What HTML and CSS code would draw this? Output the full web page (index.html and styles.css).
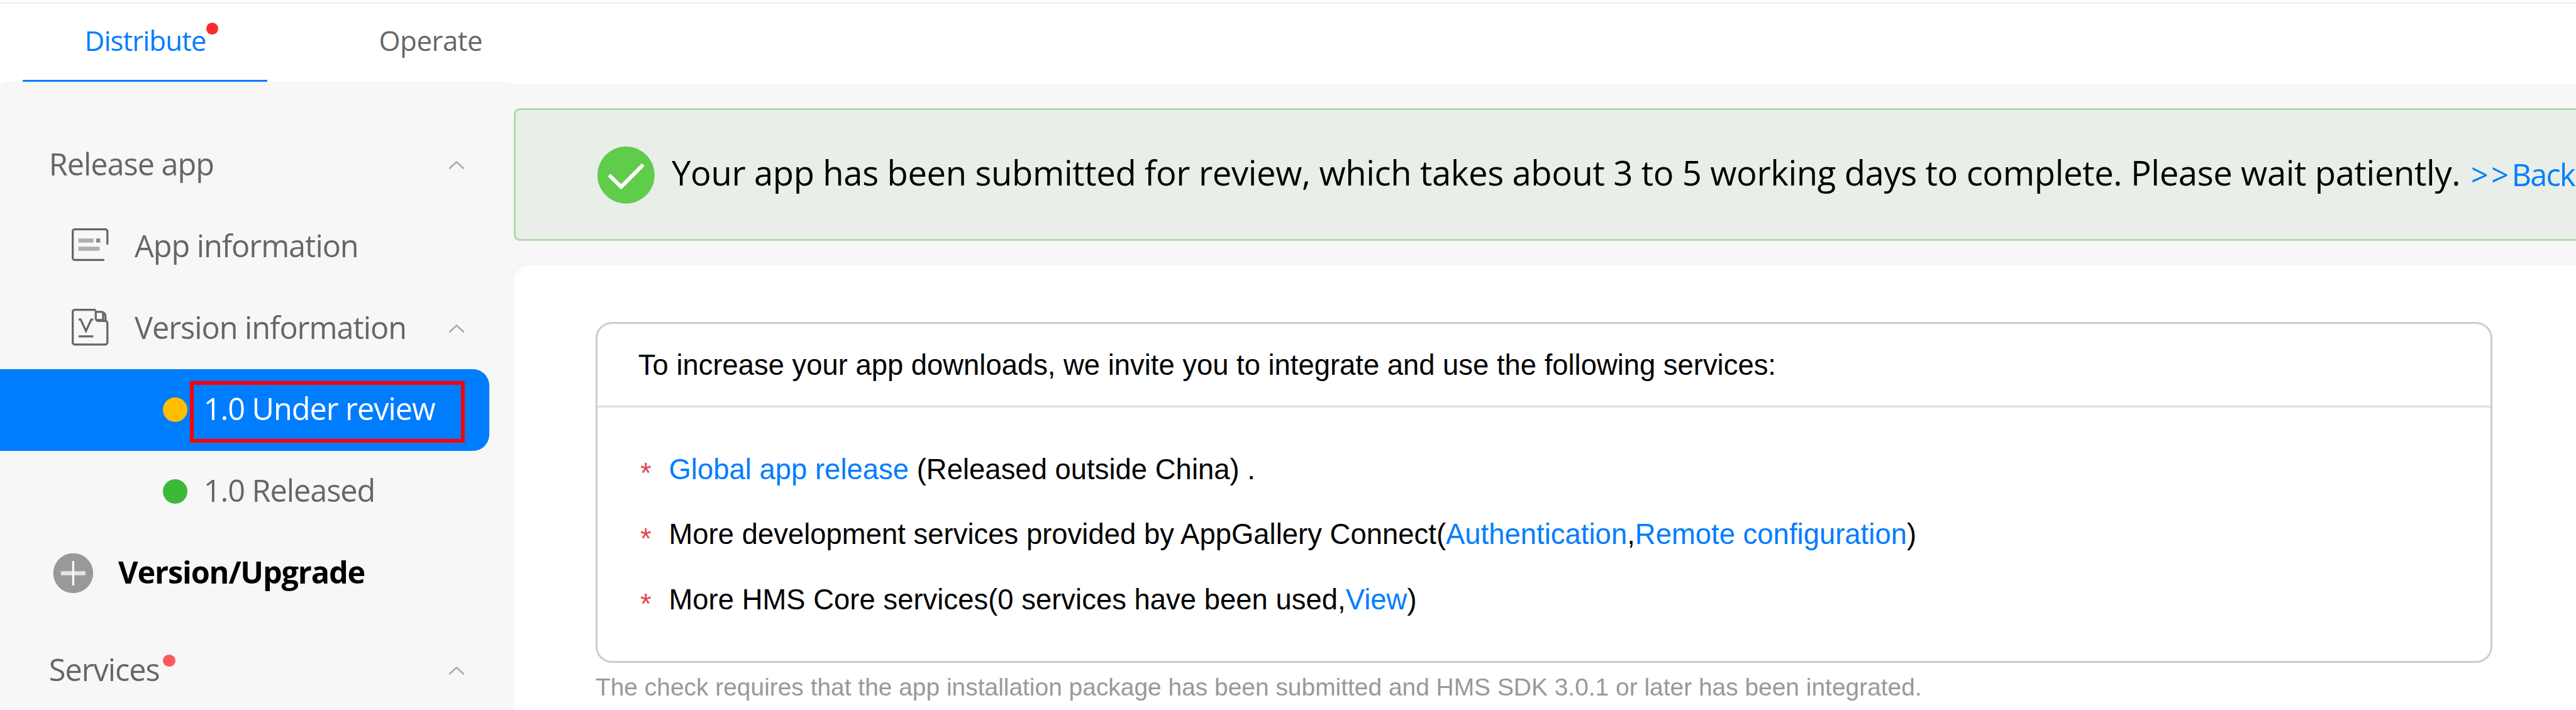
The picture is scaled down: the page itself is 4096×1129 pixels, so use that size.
FILE: index.html
```html
<!DOCTYPE html>
<html lang="en">
<head>
<meta charset="utf-8">
<title>Distribute - Version information</title>
<link rel="stylesheet" href="styles.css">
</head>
<body>
<header class="tabs">
  <a class="tab tab-active">Distribute<i class="badge"></i></a>
  <a class="tab tab-operate">Operate</a>
</header>
<div class="layout">
  <nav class="sidebar">
    <div class="row"><span class="label">Release app</span>
      <svg class="chevron" viewBox="0 0 8 4"><path d="M.4 3.8 4 .5 7.6 3.8"/></svg></div>
    <div class="row sub">
      <svg class="icon icon-app" viewBox="0 0 18 16"><path d="M17.5 8V1.5a1 1 0 0 0-1-1h-15a1 1 0 0 0-1 1v13a1 1 0 0 0 1 1H16"/><path class="thick" d="M3.3 6H10.7M3.3 10H13.7"/><path class="dot" d="M12 6h2"/></svg>
      <span class="label">App information</span></div>
    <div class="row sub">
      <svg class="icon icon-version" viewBox="0 0 18 18"><path d="M11.8.5H1.5a1 1 0 0 0-1 1v15a1 1 0 0 0 1 1h15a1 1 0 0 0 1-1V7a1 1 0 0 0-1-1h-3.2a1.4 1.4 0 0 1-1.5-1.4V.9M12 1.5h2.6c1.2.2 1.9 1 2 2.3V6M15.4 1.8V5.5H12.6"/><path d="M3.4 5.3h1L7 10.9 9.6 5.3h1M3.4 13.5h7.2"/></svg>
      <span class="label version">Version information</span>
      <svg class="chevron" viewBox="0 0 8 4"><path d="M.4 3.8 4 .5 7.6 3.8"/></svg></div>
    <div class="row leaf selected"><i class="status review"></i><span class="label">1.0 Under review</span><span class="highlight"></span></div>
    <div class="row leaf"><i class="status released"></i><span class="label">1.0 Released</span></div>
    <div class="row upgrade">
      <svg class="plus" viewBox="0 0 20 20"><circle cx="10" cy="10" r="9.8"/><path class="bar" d="M4 10H16"/><path d="M10 4V16"/></svg>
      <span class="label">Version/Upgrade</span></div>
    <div class="row services"><span class="label">Services<i class="badge"></i></span>
      <svg class="chevron" viewBox="0 0 8 4"><path d="M.4 3.8 4 .5 7.6 3.8"/></svg></div>
  </nav>
  <main class="main">
    <div class="banner">
      <svg class="check" viewBox="0 0 28 28"><circle cx="14" cy="14" r="14"/><path d="M5.7 14 11.6 19.8 22.4 8.9"/></svg>
      <p class="message">Your app has been submitted for review, which takes about 3 to 5 working days to complete. Please wait patiently.</p>
      <a class="back"><span class="arrows">&gt;&gt;</span>Back</a>
    </div>
    <section class="panel">
      <div class="card">
        <h2 class="card-title">To increase your app downloads, we invite you to integrate and use the following services:</h2>
        <ul class="list">
          <li><b>*</b><span><a>Global app release</a> (Released outside China) .</span></li>
          <li><b>*</b><span>More development services provided by AppGallery Connect(<a>Authentication</a>,<a>Remote configuration</a>)</span></li>
          <li><b>*</b><span>More HMS Core services(0 services have been used,<a>View</a>)</span></li>
        </ul>
      </div>
      <p class="note">The check requires that the app installation package has been submitted and HMS SDK 3.0.1 or later has been integrated.</p>
    </section>
  </main>
</div>
</body>
</html>
```
FILE: styles.css
```css
/* 0.1rem is one layout unit; the page is 1263 units wide */
html { font-size: 32.4307px; }
* { box-sizing: border-box; }
body {
  margin: 0; width: 100vw; height: 100vh; overflow: hidden;
  display: flex; flex-direction: column;
  background: #f7f7f7; color: #000;
  font-family: "Open Sans", "Noto Sans", sans-serif; font-size: 1.5rem;
}
h2, p, ul { margin: 0; padding: 0; font-weight: 400; }
ul { list-style: none; }
svg { display: block; flex: none; fill: none; overflow: visible; }
a { color: #007dff; }

/* top tabs */
.tabs {
  flex: none; height: 4.1rem; padding: .1rem 0 0 1.1rem;
  display: flex; gap: 2rem;
  background:
    linear-gradient(#f1f1f1, #f1f1f1) 0 .1rem / 100% .1rem no-repeat,
    linear-gradient(#f7f7f7, #f7f7f7) .2rem 4rem / 24.8rem .1rem no-repeat,
    #fff;
}
.tab {
  position: relative; width: 12rem; height: 3.9rem; padding-left: 3.05rem;
  font-size: 1.35rem; line-height: 3.82rem; letter-spacing: -.028rem; color: #666;
}
.tab-active { color: #007dff; border-bottom: .1rem solid #007dff; }
.tab-operate { padding-left: 3.48rem; letter-spacing: -.014rem; }
.badge { position: absolute; width: .6rem; height: .6rem; border-radius: 50%; background: #ff5a5a; }
.tab .badge { left: 9rem; top: 1rem; background: #fc2b2b; }

.layout { flex: 1; display: flex; min-height: 0; }

/* side menu */
.sidebar { flex: none; width: 25.2rem; padding-top: 2rem; color: #666; }
.row { position: relative; display: flex; align-items: center; width: 24rem; height: 4rem; padding: 0 1.2rem 0 2.4rem; }
.label { position: relative; padding-bottom: .1rem; letter-spacing: -.032rem; line-height: 2.4rem; white-space: nowrap; }
.label.version { letter-spacing: -.032rem; }
.chevron { width: .8rem; height: .4rem; margin-left: auto; stroke: #aaa; stroke-width: .8; }
.row.sub { padding-left: 3.5rem; gap: 1.3rem; }
.icon { width: 1.8rem; stroke: #666; stroke-width: 1; }
.icon-app { height: 1.6rem; margin-bottom: .2rem; }
.icon-version { height: 1.8rem; margin-bottom: .1rem; }
.icon .thick { stroke: #aeaeae; stroke-width: 2; }
.icon .dot { stroke: #888; stroke-width: 2; }
.row.leaf { padding-left: 8rem; gap: .78rem; }
.status { width: 1.2rem; height: 1.2rem; border-radius: 50%; flex: none; }
.review { background: #ffbf00; }
.released { background: #3aba36; }
.selected { background: #007dff; color: #fff; border-radius: 0 .8rem .8rem 0; }
.highlight { position: absolute; left: 9.3rem; top: .6rem; width: 13.5rem; height: 3rem; border: .2rem solid #f00; }
.row.upgrade { padding-left: 2.6rem; gap: 1.2rem; color: #000; font-weight: 700; }
.upgrade .label { letter-spacing: -.036rem; }
.plus { width: 2rem; height: 2rem; }
.plus circle { fill: #999; }
.plus path { stroke: #fff; stroke-width: 1; }
.plus .bar { stroke: #e4e4e4; stroke-width: 2; }
.services { margin-top: .8rem; }
.services .badge { left: 5.6rem; top: .45rem; }

/* content */
.main { flex: 1; min-width: 0; display: flex; flex-direction: column; gap: 1.2rem; padding-top: 1.2rem; }
.banner {
  flex: none; height: 6.5rem; padding-left: 4rem; display: flex; align-items: center; overflow: hidden;
  background: #e9eee8; border: .1rem solid #acdcac; border-right: 0; border-radius: .3rem 0 0 .3rem;
}
.check { width: 2.8rem; height: 2.8rem; margin-top: .1rem; }
.check circle { fill: #5fcc4a; }
.check path { stroke: #fff; stroke-width: 1.9; }
.message, .back { flex: none; white-space: nowrap; line-height: 3rem; }
.message { margin-left: .84rem; font-size: 1.68rem; letter-spacing: -.0128rem; padding-bottom: .15rem; }
.back { margin-left: .52rem; letter-spacing: -.055rem; }
.arrows { letter-spacing: .14rem; }
.panel { flex: 1; padding: 2.8rem 4.1rem 0 4rem; background: #fff; border-radius: .8rem 0 0 0; font-family: "Liberation Sans", Arial, sans-serif; font-size: 1.4rem; white-space: nowrap; }
.card { height: 16.7rem; border: .1rem solid #ccc; border-radius: .8rem; }
.card-title { height: 4.1rem; padding-left: 2rem; line-height: 4.05rem; font-size: 1.4rem; border-bottom: .1rem solid #dfdfdf; }
.list { padding: 1.43rem 0 0 2.1rem; }
.list li { display: flex; height: 3.2rem; line-height: 3.2rem; }
.list b { width: 1.4rem; padding-top: .2rem; font-weight: 400; font-size: 1.4rem; color: #e64552; }
.list span { letter-spacing: .001rem; }
.note { font-size: 1.2rem; line-height: 2.39rem; color: #999; }
```
